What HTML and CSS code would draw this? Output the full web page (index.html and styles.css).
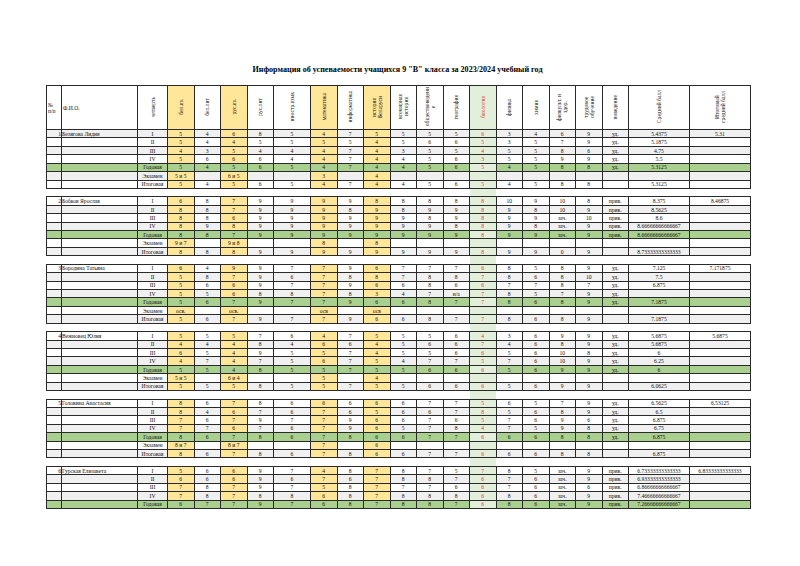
FILE: index.html
```html
<!DOCTYPE html>
<html lang="ru">
<head>
<meta charset="utf-8">
<title>Информация об успеваемости</title>
<link rel="stylesheet" href="styles.css">
</head>
<body>
<div class="page">
<div class="title">Информация об успеваемости учащихся 9 "В" класса за 2023/2024 учебный год</div>
<table class="grid">
<colgroup>
<col class="c-n"><col class="c-f"><col class="c-q">
<col class="c-s"><col class="c-s"><col class="c-s"><col class="c-s"><col class="c-w">
<col class="c-s"><col class="c-s"><col class="c-s"><col class="c-s"><col class="c-s"><col class="c-s">
<col class="c-s"><col class="c-s"><col class="c-s"><col class="c-s"><col class="c-s"><col class="c-s">
<col class="c-a"><col class="c-a">
</colgroup>
<thead>
<tr>
<th class="hl">№<br>п/п</th>
<th class="hl">Ф.И.О.</th>
<th><span class="v">четверть</span></th>
<th class="y"><span class="v">бел.яз.</span></th>
<th><span class="v">бел.лит</span></th>
<th class="y"><span class="v">рус.яз.</span></th>
<th><span class="v">рус.лит</span></th>
<th><span class="v">иностр.язык</span></th>
<th class="y"><span class="v">математика</span></th>
<th><span class="v">информатика</span></th>
<th class="y"><span class="v">история<br>Беларуси</span></th>
<th><span class="v">всемирная<br>история</span></th>
<th><span class="v">обществоведени<br>е</span></th>
<th><span class="v">география</span></th>
<th class="bio"><span class="v">биология</span></th>
<th><span class="v">физика</span></th>
<th><span class="v">химия</span></th>
<th><span class="v">физкульт. и<br>здор.</span></th>
<th><span class="v">трудовое<br>обучение</span></th>
<th><span class="v">поведение</span></th>
<th><span class="v">Средний балл</span></th>
<th><span class="v">Итоговый<br>средний балл</span></th>
</tr>
</thead>
<tbody>
<tr class="s"><td class="n">1</td><td class="f">Белягова Лидия</td><td>I</td><td>5</td><td>4</td><td>6</td><td>8</td><td>5</td><td>4</td><td>7</td><td>5</td><td>5</td><td>5</td><td>5</td><td>6</td><td>3</td><td>4</td><td>6</td><td>9</td><td>уд.</td><td>5.4375</td><td>5.31</td></tr>
<tr><td></td><td></td><td>II</td><td>5</td><td>4</td><td>4</td><td>5</td><td>5</td><td>5</td><td>5</td><td>4</td><td>5</td><td>6</td><td>6</td><td>5</td><td>3</td><td>5</td><td>7</td><td>9</td><td>уд.</td><td>5.1875</td><td></td></tr>
<tr class="s"><td></td><td></td><td>III</td><td>4</td><td>3</td><td>5</td><td>4</td><td>4</td><td>4</td><td>7</td><td>4</td><td>3</td><td>5</td><td>5</td><td>4</td><td>5</td><td>5</td><td>8</td><td>6</td><td>уд.</td><td>4.75</td><td></td></tr>
<tr><td></td><td></td><td>IV</td><td>5</td><td>6</td><td>6</td><td>6</td><td>4</td><td>4</td><td>7</td><td>4</td><td>4</td><td>5</td><td>6</td><td>3</td><td>5</td><td>5</td><td>9</td><td>9</td><td>уд.</td><td>5.5</td><td></td></tr>
<tr class="gr"><td></td><td></td><td>Годовая</td><td>5</td><td>4</td><td>5</td><td>6</td><td>5</td><td>4</td><td>7</td><td>4</td><td>4</td><td>5</td><td>6</td><td>5</td><td>4</td><td>5</td><td>8</td><td>8</td><td>уд.</td><td>5.3125</td><td></td></tr>
<tr class="s"><td></td><td></td><td>Экзамен</td><td>5 и 5</td><td></td><td>6 и 5</td><td></td><td></td><td>3</td><td></td><td>4</td><td></td><td></td><td></td><td></td><td></td><td></td><td></td><td></td><td></td><td></td><td></td></tr>
<tr><td></td><td></td><td>Итоговая</td><td>5</td><td>4</td><td>5</td><td>6</td><td>5</td><td>4</td><td>7</td><td>4</td><td>4</td><td>5</td><td>6</td><td>5</td><td>4</td><td>5</td><td>8</td><td>8</td><td></td><td>5.3125</td><td></td></tr>
<tr class="gap"><td></td><td></td><td></td><td></td><td></td><td></td><td></td><td></td><td></td><td></td><td></td><td></td><td></td><td></td><td></td><td></td><td></td><td></td><td></td><td></td><td></td><td></td></tr>

<tr><td class="n">2</td><td class="f">Бобков Ярослав</td><td>I</td><td>6</td><td>8</td><td>7</td><td>9</td><td>9</td><td>9</td><td>9</td><td>8</td><td>8</td><td>8</td><td>8</td><td>8</td><td>10</td><td>9</td><td>10</td><td>8</td><td>прив.</td><td>8.375</td><td>8.46875</td></tr>
<tr class="s"><td></td><td></td><td>II</td><td>8</td><td>8</td><td>7</td><td>9</td><td>9</td><td>9</td><td>8</td><td>9</td><td>8</td><td>9</td><td>9</td><td>8</td><td>9</td><td>8</td><td>10</td><td>9</td><td>прив.</td><td>8.5625</td><td></td></tr>
<tr><td></td><td></td><td>III</td><td>8</td><td>8</td><td>6</td><td>9</td><td>9</td><td>9</td><td>9</td><td>9</td><td>9</td><td>8</td><td>9</td><td>8</td><td>9</td><td>9</td><td>зач.</td><td>10</td><td>прив.</td><td>8.6</td><td></td></tr>
<tr class="s"><td></td><td></td><td>IV</td><td>8</td><td>9</td><td>8</td><td>9</td><td>9</td><td>9</td><td>9</td><td>9</td><td>9</td><td>9</td><td>8</td><td>8</td><td>9</td><td>8</td><td>зач.</td><td>9</td><td>прив.</td><td>8.66666666666667</td><td></td></tr>
<tr class="gr"><td></td><td></td><td>Годовая</td><td>8</td><td>8</td><td>7</td><td>9</td><td>9</td><td>9</td><td>9</td><td>9</td><td>9</td><td>9</td><td>9</td><td>8</td><td>9</td><td>9</td><td>зач.</td><td>9</td><td>прив.</td><td>8.66666666666667</td><td></td></tr>
<tr><td></td><td></td><td>Экзамен</td><td>9 и 7</td><td></td><td>9 и 8</td><td></td><td></td><td>8</td><td></td><td>8</td><td></td><td></td><td></td><td></td><td></td><td></td><td></td><td></td><td></td><td></td><td></td></tr>
<tr class="s"><td></td><td></td><td>Итоговая</td><td>8</td><td>8</td><td>8</td><td>9</td><td>9</td><td>9</td><td>9</td><td>9</td><td>9</td><td>9</td><td>9</td><td>8</td><td>9</td><td>9</td><td>0</td><td>9</td><td></td><td>8.73333333333333</td><td></td></tr>
<tr class="gap"><td></td><td></td><td></td><td></td><td></td><td></td><td></td><td></td><td></td><td></td><td></td><td></td><td></td><td></td><td></td><td></td><td></td><td></td><td></td><td></td><td></td><td></td></tr>

<tr><td class="n">3</td><td class="f">Бородина Татьяна</td><td>I</td><td>6</td><td>4</td><td>9</td><td>9</td><td>7</td><td>7</td><td>9</td><td>6</td><td>7</td><td>7</td><td>7</td><td>6</td><td>8</td><td>5</td><td>8</td><td>9</td><td>уд.</td><td>7.125</td><td>7.171875</td></tr>
<tr class="s"><td></td><td></td><td>II</td><td>5</td><td>8</td><td>7</td><td>9</td><td>6</td><td>7</td><td>8</td><td>8</td><td>7</td><td>8</td><td>8</td><td>7</td><td>8</td><td>6</td><td>8</td><td>10</td><td>уд.</td><td>7.5</td><td></td></tr>
<tr><td></td><td></td><td>III</td><td>5</td><td>6</td><td>6</td><td>9</td><td>7</td><td>7</td><td>9</td><td>6</td><td>6</td><td>8</td><td>6</td><td>6</td><td>7</td><td>7</td><td>8</td><td>7</td><td>уд.</td><td>6.875</td><td></td></tr>
<tr class="s"><td></td><td></td><td>IV</td><td>5</td><td>5</td><td>6</td><td>8</td><td>8</td><td>7</td><td>8</td><td>3</td><td>4</td><td>7</td><td>н/а</td><td>7</td><td>8</td><td>5</td><td>7</td><td>9</td><td>уд.</td><td></td><td></td></tr>
<tr class="gr"><td></td><td></td><td>Годовая</td><td>5</td><td>6</td><td>7</td><td>9</td><td>7</td><td>7</td><td>9</td><td>6</td><td>6</td><td>8</td><td>7</td><td>7</td><td>8</td><td>6</td><td>8</td><td>9</td><td>уд.</td><td>7.1875</td><td></td></tr>
<tr><td></td><td></td><td>Экзамен</td><td>осв.</td><td></td><td>осв.</td><td></td><td></td><td>осв</td><td></td><td>осв</td><td></td><td></td><td></td><td></td><td></td><td></td><td></td><td></td><td></td><td></td><td></td></tr>
<tr class="s"><td></td><td></td><td>Итоговая</td><td>5</td><td>6</td><td>7</td><td>9</td><td>7</td><td>7</td><td>9</td><td>6</td><td>6</td><td>8</td><td>7</td><td>7</td><td>8</td><td>6</td><td>8</td><td>9</td><td></td><td>7.1875</td><td></td></tr>
<tr class="gap"><td></td><td></td><td></td><td></td><td></td><td></td><td></td><td></td><td></td><td></td><td></td><td></td><td></td><td></td><td></td><td></td><td></td><td></td><td></td><td></td><td></td><td></td></tr>

<tr><td class="n">4</td><td class="f">Вежновец Юлия</td><td>I</td><td>5</td><td>5</td><td>5</td><td>7</td><td>6</td><td>4</td><td>7</td><td>5</td><td>5</td><td>5</td><td>6</td><td>4</td><td>3</td><td>6</td><td>9</td><td>9</td><td>уд.</td><td>5.6875</td><td>5.6875</td></tr>
<tr class="s"><td></td><td></td><td>II</td><td>4</td><td>4</td><td>4</td><td>8</td><td>4</td><td>6</td><td>6</td><td>4</td><td>5</td><td>6</td><td>6</td><td>7</td><td>4</td><td>6</td><td>8</td><td>9</td><td>уд.</td><td>5.6875</td><td></td></tr>
<tr><td></td><td></td><td>III</td><td>6</td><td>5</td><td>4</td><td>9</td><td>5</td><td>5</td><td>7</td><td>4</td><td>5</td><td>5</td><td>6</td><td>6</td><td>5</td><td>6</td><td>10</td><td>8</td><td>уд.</td><td>6</td><td></td></tr>
<tr class="s"><td></td><td></td><td>IV</td><td>4</td><td>7</td><td>4</td><td>7</td><td>5</td><td>6</td><td>7</td><td>5</td><td>4</td><td>7</td><td>7</td><td>5</td><td>7</td><td>6</td><td>10</td><td>9</td><td>уд.</td><td>6.25</td><td></td></tr>
<tr class="gr"><td></td><td></td><td>Годовая</td><td>5</td><td>5</td><td>4</td><td>8</td><td>5</td><td>5</td><td>7</td><td>5</td><td>5</td><td>6</td><td>6</td><td>6</td><td>5</td><td>6</td><td>9</td><td>9</td><td>уд.</td><td>6</td><td></td></tr>
<tr><td></td><td></td><td>Экзамен</td><td>5 и 5</td><td></td><td>6 и 4</td><td></td><td></td><td>5</td><td></td><td>4</td><td></td><td></td><td></td><td></td><td></td><td></td><td></td><td></td><td></td><td></td><td></td></tr>
<tr class="s"><td></td><td></td><td>Итоговая</td><td>5</td><td>5</td><td>5</td><td>8</td><td>5</td><td>5</td><td>7</td><td>5</td><td>5</td><td>6</td><td>6</td><td>6</td><td>5</td><td>6</td><td>9</td><td>9</td><td></td><td>6.0625</td><td></td></tr>
<tr class="gap"><td></td><td></td><td></td><td></td><td></td><td></td><td></td><td></td><td></td><td></td><td></td><td></td><td></td><td></td><td></td><td></td><td></td><td></td><td></td><td></td><td></td><td></td></tr>

<tr><td class="n">5</td><td class="f">Головина Анастасия</td><td>I</td><td>8</td><td>6</td><td>7</td><td>8</td><td>6</td><td>6</td><td>6</td><td>6</td><td>6</td><td>7</td><td>7</td><td>5</td><td>6</td><td>5</td><td>7</td><td>9</td><td>уд.</td><td>6.5625</td><td>6.53125</td></tr>
<tr class="s"><td></td><td></td><td>II</td><td>8</td><td>4</td><td>6</td><td>7</td><td>6</td><td>7</td><td>6</td><td>5</td><td>6</td><td>6</td><td>7</td><td>8</td><td>5</td><td>6</td><td>8</td><td>9</td><td>уд.</td><td>6.5</td><td></td></tr>
<tr><td></td><td></td><td>III</td><td>7</td><td>6</td><td>7</td><td>9</td><td>7</td><td>7</td><td>9</td><td>6</td><td>6</td><td>7</td><td>6</td><td>5</td><td>7</td><td>6</td><td>9</td><td>6</td><td>уд.</td><td>6.875</td><td></td></tr>
<tr class="s"><td></td><td></td><td>IV</td><td>7</td><td>7</td><td>6</td><td>7</td><td>6</td><td>7</td><td>9</td><td>6</td><td>5</td><td>7</td><td>8</td><td>4</td><td>7</td><td>5</td><td>9</td><td>8</td><td>уд.</td><td>6.75</td><td></td></tr>
<tr class="gr"><td></td><td></td><td>Годовая</td><td>8</td><td>6</td><td>7</td><td>8</td><td>6</td><td>7</td><td>8</td><td>6</td><td>6</td><td>7</td><td>7</td><td>6</td><td>6</td><td>6</td><td>8</td><td>8</td><td>уд.</td><td>6.875</td><td></td></tr>
<tr><td></td><td></td><td>Экзамен</td><td>8 и 7</td><td></td><td>8 и 7</td><td></td><td></td><td>7</td><td></td><td>6</td><td></td><td></td><td></td><td></td><td></td><td></td><td></td><td></td><td></td><td></td><td></td></tr>
<tr class="s"><td></td><td></td><td>Итоговая</td><td>8</td><td>6</td><td>7</td><td>8</td><td>6</td><td>7</td><td>8</td><td>6</td><td>6</td><td>7</td><td>7</td><td>6</td><td>6</td><td>6</td><td>8</td><td>8</td><td></td><td>6.875</td><td></td></tr>
<tr class="gap"><td></td><td></td><td></td><td></td><td></td><td></td><td></td><td></td><td></td><td></td><td></td><td></td><td></td><td></td><td></td><td></td><td></td><td></td><td></td><td></td><td></td><td></td></tr>

<tr><td class="n">6</td><td class="f">Гурская Елизавета</td><td>I</td><td>5</td><td>6</td><td>6</td><td>9</td><td>7</td><td>4</td><td>8</td><td>7</td><td>8</td><td>7</td><td>5</td><td>7</td><td>8</td><td>5</td><td>зач.</td><td>9</td><td>прив.</td><td>6.73333333333333</td><td>6.83333333333333</td></tr>
<tr class="s"><td></td><td></td><td>II</td><td>6</td><td>6</td><td>6</td><td>9</td><td>6</td><td>7</td><td>6</td><td>7</td><td>8</td><td>8</td><td>7</td><td>6</td><td>7</td><td>6</td><td>зач.</td><td>9</td><td>прив.</td><td>6.93333333333333</td><td></td></tr>
<tr><td></td><td></td><td>III</td><td>7</td><td>8</td><td>7</td><td>9</td><td>7</td><td>5</td><td>8</td><td>7</td><td>7</td><td>7</td><td>6</td><td>6</td><td>7</td><td>6</td><td>зач.</td><td>6</td><td>прив.</td><td>6.86666666666667</td><td></td></tr>
<tr class="s"><td></td><td></td><td>IV</td><td>7</td><td>8</td><td>7</td><td>8</td><td>8</td><td>6</td><td>8</td><td>7</td><td>8</td><td>8</td><td>8</td><td>6</td><td>8</td><td>6</td><td>зач.</td><td>9</td><td>прив.</td><td>7.46666666666667</td><td></td></tr>
<tr class="gr"><td></td><td></td><td>Годовая</td><td>6</td><td>7</td><td>7</td><td>9</td><td>7</td><td>6</td><td>8</td><td>7</td><td>8</td><td>8</td><td>7</td><td>6</td><td>8</td><td>6</td><td>зач.</td><td>9</td><td>прив.</td><td>7.26666666666667</td><td></td></tr>
</tbody>
</table>
</div>
</body>
</html>
```
FILE: styles.css
```css
html, body {
  margin: 0;
  padding: 0;
  background: #fff;
}
body {
  font-family: "Liberation Serif", "Times New Roman", serif;
  color: #111;
}
.page {
  padding: 65px 0 0 46px;
  width: 703px;
}
.title {
  font-weight: bold;
  font-size: 8.1px;
  line-height: 10px;
  height: 10px;
  text-align: center;
  color: #000;
  margin-bottom: 10px;
}
.grid {
  border-collapse: collapse;
  table-layout: fixed;
  width: 703px;
}
.c-n { width: 15px; }
.c-f { width: 76px; }
.c-q { width: 30px; }
.c-s { width: 26.5px; }
.c-w { width: 37px; }
.c-a { width: 61px; }

.grid th,
.grid td {
  border: 1px solid #2a2a2a;
  padding: 0;
  font-size: 5.6px;
  line-height: 6px;
  text-align: center;
  vertical-align: middle;
  white-space: nowrap;
  overflow: hidden;
  font-weight: normal;
}
.grid thead tr { height: 44px; }
.grid tbody tr { height: 8.43px; }
.grid th.hl {
  text-align: left;
  padding-left: 1px;
  line-height: 6px;
}
.grid .v {
  display: inline-block;
  writing-mode: vertical-rl;
  transform: rotate(180deg);
  line-height: 6px;
  text-align: center;
}
.grid th.y { background: #ffe699; }
.grid th.bio { background: #e2efda; color: #e03c31; }

.grid td.n { text-align: right; padding-right: 0; }
.grid td.f { text-align: left; }

.grid tr.s td { background: #f0f0f0; }
.grid tbody td:nth-child(4),
.grid tbody td:nth-child(6),
.grid tbody td:nth-child(9),
.grid tbody td:nth-child(11) { background: #ffe699; }
.grid tbody tr.gr td { background: #a9d08e; }
.grid tbody tr td:nth-child(15) { background: #e2efda; color: #e03c31; }

.grid tbody tr.gap td {
  border: none;
  background: transparent;
}
.grid tbody tr.gap td:nth-child(15) { background: #e2efda; }
```
